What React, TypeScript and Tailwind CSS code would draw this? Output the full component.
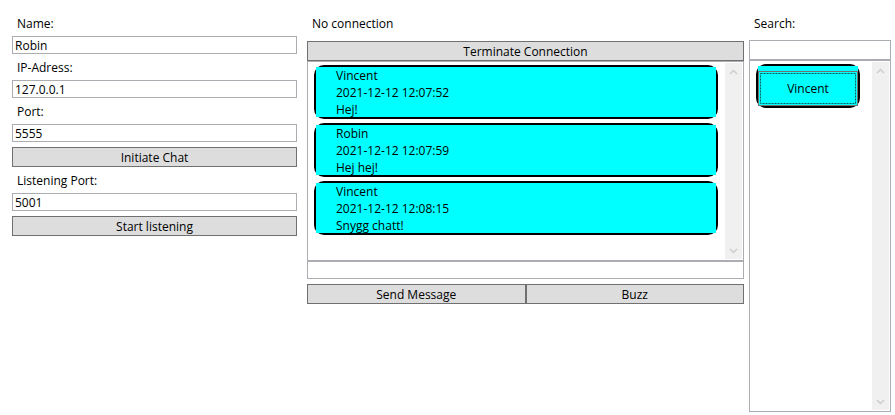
import { useState } from "react";
import type { ReactNode } from "react";

const messages = [
  { name: "Vincent", time: "2021-12-12 12:07:52", text: "Hej!" },
  { name: "Robin", time: "2021-12-12 12:07:59", text: "Hej hej!" },
  { name: "Vincent", time: "2021-12-12 12:08:15", text: "Snygg chatt!" },
];

function Field({ id, label, initial }: { id: string; label: string; initial: string }) {
  const [value, setValue] = useState(initial);
  return (
    <>
      <label htmlFor={id} className="h-[26px] px-[5px] pt-[5px] leading-[18px]">
        {label}
      </label>
      <input
        id={id}
        value={value}
        onChange={(e) => setValue(e.target.value)}
        className="h-[18px] w-full border border-[#abadb3] bg-white px-0.5 pt-px outline-none"
      />
    </>
  );
}

function Button({ children, className = "" }: { children: ReactNode; className?: string }) {
  return (
    <button
      type="button"
      className={`h-5 border border-[#707070] bg-[#dddddd] pt-px text-center leading-[18px] ${className}`}
    >
      {children}
    </button>
  );
}

function ScrollBar() {
  return (
    <div className="flex w-[17px] shrink-0 flex-col justify-between bg-[#f0f0f0]" aria-hidden="true">
      <svg width="17" height="17" viewBox="0 0 17 17" fill="none" stroke="#cdcdcd" strokeWidth="1.5">
        <path d="M5 11 8.5 7.5 12 11" />
      </svg>
      <svg width="17" height="17" viewBox="0 0 17 17" fill="none" stroke="#cdcdcd" strokeWidth="1.5">
        <path d="M5 7 8.5 10.5 12 7" />
      </svg>
    </div>
  );
}

function FocusRing() {
  return (
    <svg className="absolute inset-px" width="96" height="31" fill="none" aria-hidden="true">
      <rect x="0.5" y="0.5" width="95" height="30" stroke="#0a5a5a" strokeDasharray="2 1" />
    </svg>
  );
}

export default function App() {
  return (
    <main className="grid min-h-screen grid-cols-[290fr_437fr_142fr] gap-[5px] bg-white pt-2.5 pr-1 pb-[3px] pl-3 font-['Open_Sans','Noto_Sans',sans-serif] text-xs text-black">
      <section className="mr-[5px] flex min-w-0 flex-col">
        <Field id="name" label="Name:" initial="Robin" />
        <Field id="ip" label="IP-Adress:" initial="127.0.0.1" />
        <Field id="port" label="Port:" initial="5555" />
        <Button className="mt-[5px]">Initiate Chat</Button>
        <Field id="listening-port" label="Listening Port:" initial="5001" />
        <Button className="mt-[5px]">Start listening</Button>
      </section>

      <section className="flex min-w-0 flex-col">
        <p className="h-[26px] px-[5px] pt-[5px] leading-[18px]">No connection</p>
        <Button className="mt-[5px]">Terminate Connection</Button>
        <div className="flex h-[200px] border border-[#abadb3] p-px">
          <ul className="flex flex-1 flex-col gap-1 pt-0.5 pr-[7px] pl-[5px]">
            {messages.map((m) => (
              <li key={m.time} className="rounded-[10px] border-2 border-black">
                <div className="h-[50px] bg-[#00ffff] pl-5 leading-[17px]">
                  <p>{m.name}</p>
                  <p>{m.time}</p>
                  <p>{m.text}</p>
                </div>
              </li>
            ))}
          </ul>
          <ScrollBar />
        </div>
        <input
          aria-label="Message"
          className="h-[18px] w-full border border-[#abadb3] bg-white px-0.5 pt-px outline-none"
        />
        <div className="mt-[5px] grid grid-cols-2">
          <Button>Send Message</Button>
          <Button>Buzz</Button>
        </div>
      </section>

      <section className="flex min-w-0 flex-col">
        <label htmlFor="search" className="h-[30px] px-[5px] pt-[5px] leading-[18px]">
          Search:
        </label>
        <input
          id="search"
          className="h-5 w-full border border-[#abadb3] bg-white px-0.5 outline-none"
        />
        <div className="flex flex-1 border border-[#abadb3] p-px">
          <ul className="flex-1 pt-0.5 pr-3 pl-[5px]">
            <li className="w-[104px] rounded-[10px] border-2 border-black">
              <div className="bg-[#00ffff] pt-[5px]">
                <button type="button" className="relative block h-[35px] w-full border border-[#707070] text-center">
                  Vincent
                  <FocusRing />
                </button>
              </div>
            </li>
          </ul>
          <ScrollBar />
        </div>
      </section>
    </main>
  );
}
